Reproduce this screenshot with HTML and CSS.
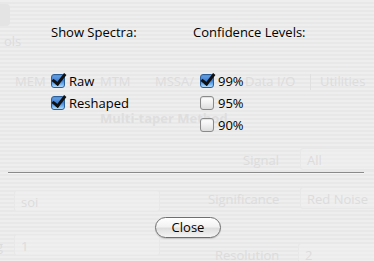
FILE: index.html
```html
<!DOCTYPE html>
<html lang="en">
<head>
  <meta charset="UTF-8" />
  <title>Show Spectra</title>
  <link rel="stylesheet" href="styles.css">
</head>
<body>

  <!-- dimmed window behind the sheet -->
  <div class="backdrop">
    <div class="ghost ghost-icon"></div>
    <div class="ghost" style="left:4px;top:33px">ols</div>
    <div class="ghost" style="left:15px;top:73px">MEM</div>
    <div class="ghost" style="left:100px;top:73px">MTM</div>
    <div class="ghost" style="left:155px;top:73px">MSSA/</div>
    <div class="ghost" style="left:245px;top:73px">Data I/O</div>
    <div class="ghost ghost-sep" style="left:310px;top:74px"></div>
    <div class="ghost" style="left:320px;top:73px">Utilities</div>
    <div class="ghost ghost-bold" style="left:100px;top:110px">Multi-taper Method</div>
    <div class="ghost" style="left:243px;top:152px">Signal</div>
    <div class="ghost ghost-field" style="left:300px;top:148px;width:80px">All</div>
    <div class="ghost ghost-field" style="left:14px;top:190px;width:146px">soi</div>
    <div class="ghost" style="left:208px;top:191px">Significance</div>
    <div class="ghost ghost-field" style="left:300px;top:187px;width:80px">Red Noise</div>
    <div class="ghost" style="left:-4px;top:238px">g</div>
    <div class="ghost ghost-field" style="left:14px;top:234px;width:146px">1</div>
    <div class="ghost" style="left:215px;top:247px">Resolution</div>
    <div class="ghost ghost-field" style="left:298px;top:243px;width:80px">2</div>
  </div>

  <!-- sheet -->
  <div class="sheet">
    <div class="columns">
      <div class="group">
        <div class="group-title">Show Spectra:</div>
        <div class="checks">
          <label class="check"><span class="box on"></span>Raw</label>
          <label class="check"><span class="box on"></span>Reshaped</label>
        </div>
      </div>
      <div class="group">
        <div class="group-title">Confidence Levels:</div>
        <div class="checks indent">
          <label class="check"><span class="box on"></span>99%</label>
          <label class="check"><span class="box"></span>95%</label>
          <label class="check"><span class="box"></span>90%</label>
        </div>
      </div>
    </div>

    <div class="divider"></div>

    <div class="actions">
      <button class="btn">Close</button>
    </div>
  </div>

</body>
</html>
```

FILE: styles.css
```css
body {
  margin: 0;
  width: 374px;
  height: 261px;
  overflow: hidden;
  position: relative;
  font-family: 'Open Sans', 'DejaVu Sans', sans-serif;
  font-size: 13px;
  color: #000;
  background: repeating-linear-gradient(to bottom, #eeeeee 0, #eeeeee 2px, #e8e8e8 2px, #e8e8e8 4px);
}

/* dimmed window */
.backdrop {
  position: absolute;
  inset: 0;
  z-index: 0;
}

.ghost {
  position: absolute;
  color: #dcdcdc;
  font-size: 13px;
  line-height: 16px;
  white-space: nowrap;
}

.ghost-bold {
  font-weight: 700;
  color: #dedede;
}

.ghost-sep {
  width: 1px;
  height: 16px;
  background: #e0e0e0;
}

.ghost-field {
  height: 22px;
  line-height: 22px;
  padding-left: 6px;
  box-sizing: border-box;
  border: 1px solid #e8e8e8;
  border-radius: 3px;
  background: rgba(240, 240, 240, 0.5);
}

.ghost-icon {
  left: -6px;
  top: 4px;
  width: 16px;
  height: 22px;
  border-radius: 4px;
  background: #e4e4e4;
}

/* sheet */
.sheet {
  position: relative;
  z-index: 1;
  padding-top: 24px;
}

.columns {
  display: flex;
  padding-left: 51px;
}

.group {
  width: 142px;
}

.group-title {
  line-height: 16px;
}

.checks {
  margin-top: 30px;
  display: flex;
  flex-direction: column;
}

.checks.indent {
  padding-left: 7px;
}

.check {
  display: flex;
  align-items: center;
  gap: 4px;
  height: 22px;
  line-height: 16px;
}

.box {
  width: 14px;
  height: 14px;
  box-sizing: border-box;
  border: 1px solid #8a8a8a;
  border-radius: 3px;
  background: linear-gradient(to bottom, #ffffff, #f0f0f0 50%, #dcdcdc);
  box-shadow: inset 0 1px 1px rgba(0, 0, 0, 0.12);
  position: relative;
}

.box.on {
  border-color: #2c5e98;
  background: linear-gradient(to bottom, #6fa6e6 0%, #3b80d6 45%, #6fb1f0 75%, #b5dcfb 100%);
}

.box.on::after {
  content: "";
  position: absolute;
  left: 3px;
  top: -4px;
  width: 5px;
  height: 11px;
  border-right: 3px solid #111;
  border-bottom: 3px solid #111;
  transform: rotate(38deg);
  transform-origin: 50% 50%;
}

.divider {
  margin: 36px 10px 0 8px;
  height: 1px;
  background: #8a8a8a;
  box-shadow: 0 1px 0 #f6f6f6;
}

.actions {
  display: flex;
  justify-content: center;
  padding: 44px 0 0 2px;
}

.btn {
  width: 66px;
  height: 21px;
  padding: 0;
  font-family: inherit;
  font-size: 13px;
  line-height: 19px;
  color: #000;
  border: 1px solid #6f6f6f;
  border-radius: 11px;
  background: linear-gradient(to bottom, #ffffff 0%, #f2f2f2 45%, #dedede 55%, #f4f4f4 100%);
  box-shadow: 0 1px 1px rgba(0, 0, 0, 0.15);
}
```
